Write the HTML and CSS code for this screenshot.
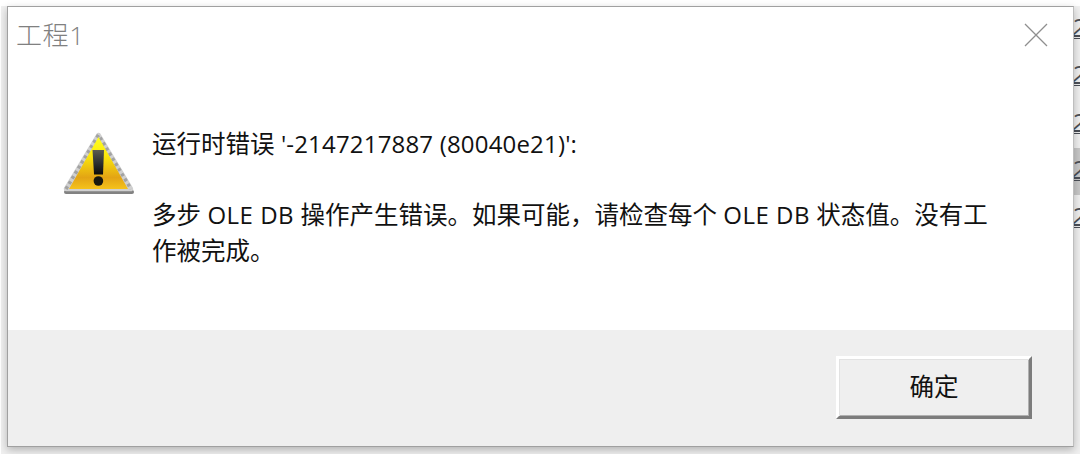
FILE: index.html
```html
<!DOCTYPE html>
<html lang="zh-CN">
<head>
    <meta charset="UTF-8">
    <meta name="viewport" content="width=device-width, initial-scale=1.0">
    <title>工程1</title>
    <link rel="stylesheet" href="styles.css">
</head>
<body>
    <!-- list behind the dialog -->
    <div class="backdrop">
        <div class="row">2</div>
        <div class="row">2</div>
        <div class="row">2</div>
        <div class="row selected">2</div>
        <div class="row">2</div>
    </div>
    <div class="dialog">
        <div class="titlebar">
            <span class="title">工程1</span>
            <svg class="close" width="24" height="24" viewBox="0 0 24 24">
                <path d="M1 1L23 23M23 1L1 23" fill="none" stroke="#8f8f8f" stroke-width="1.3"/>
            </svg>
        </div>
        <div class="content">
            <svg class="warning" width="72" height="66" viewBox="0 0 72 66">
                <defs>
                    <linearGradient id="yellow" x1="0" y1="0" x2="0" y2="1">
                        <stop offset="0" stop-color="#ffff20"/>
                        <stop offset="0.35" stop-color="#fbe90c"/>
                        <stop offset="0.78" stop-color="#e3a414"/>
                        <stop offset="1" stop-color="#f5c21c"/>
                    </linearGradient>
                    <linearGradient id="mark" x1="0" y1="0" x2="0" y2="1">
                        <stop offset="0" stop-color="#5c5c50"/>
                        <stop offset="0.5" stop-color="#2e3234"/>
                        <stop offset="1" stop-color="#0c0c08"/>
                    </linearGradient>
                </defs>
                <path d="M3 61H69" stroke="#828282" stroke-width="4" stroke-linecap="round"/>
                <path d="M35.5 4L68 58H3Z" fill="#d2d2d2" stroke="#d0d0d0" stroke-width="4.5" stroke-linejoin="round"/>
                <path d="M3 58L35.5 4L68 58" fill="none" stroke="#a2a2a2" stroke-width="3.5" stroke-dasharray="3 3"/>
                <path d="M35.5 6L65 58H6Z" fill="url(#yellow)"/>
                <path d="M29.5 19H41L40 43.5H31Z" fill="url(#mark)"/>
                <circle cx="35.4" cy="50" r="4.8" fill="#17170f"/>
            </svg>
            <div class="message">
                <p>运行时错误 <span class="code">'-2147217887 (80040e21)':</span></p>
                <p>多步 <span class="latin">OLE DB</span> 操作产生错误。如果可能，请检查每个 <span class="latin">OLE DB</span> 状态值。没有工<br>作被完成。</p>
            </div>
        </div>
        <div class="footer">
            <button class="ok">确定</button>
        </div>
    </div>
</body>
</html>
```
FILE: styles.css
```css
* {
    box-sizing: border-box;
}
body {
    margin: 0;
    height: 454px;
    padding: 6px 0 0 7px;
    overflow: hidden;
    position: relative;
    background: white;
    font-family: "Open Sans", "Noto Sans CJK SC", sans-serif;
}
.backdrop {
    position: absolute;
    left: 1px;
    top: 6px;
    right: 0;
    bottom: 0;
    background: #f0f0f0;
}
.row {
    height: 47.3px;
    margin-left: 1066px;
    padding: 7px 0 0 4px;
    overflow: hidden;
    font-size: 25px;
    font-style: italic;
    line-height: 28px;
    color: #4c5058;
    text-decoration: underline;
    text-decoration-thickness: 1px;
    text-decoration-skip-ink: none;
    text-underline-offset: 1px;
}
.selected {
    background: #c8c8c8;
}
.dialog {
    position: relative;
    display: flex;
    flex-direction: column;
    width: 1067px;
    height: 441px;
    border: 1px solid #a0a0a0;
    border-right-color: #bebebe;
    background: white;
    box-shadow: 0 3px 8px rgba(0, 0, 0, 0.25);
}
.titlebar {
    display: flex;
    justify-content: space-between;
    height: 57px;
    padding: 10px 25px 0 8px;
}
.title {
    font-size: 26px;
    line-height: 36px;
    font-weight: 300;
    letter-spacing: 0.6px;
    color: #808080;
}
.close {
    margin-top: 6px;
}
.content {
    display: flex;
    flex: 1;
    padding: 62px 0 0 55px;
}
.warning {
    margin-top: 5px;
}
.message {
    margin-left: 17px;
    font-size: 24.5px;
    line-height: 35.5px;
    color: #111111;
    white-space: nowrap;
}
.message p {
    margin: 0 0 35.5px;
}
.code {
    font-size: 24px;
    letter-spacing: 0.18px;
}
.latin {
    font-size: 24px;
    letter-spacing: 0.5px;
}
.footer {
    display: flex;
    justify-content: flex-end;
    height: 116px;
    padding: 26px 41px 0 0;
    background: #efefef;
}
.ok {
    width: 196px;
    height: 63px;
    padding: 0 0 4px;
    border: 3px solid;
    border-color: #ffffff #7c7c7c #7c7c7c #ffffff;
    background: #efefef;
    box-shadow: inset 1px 1px #e2e2e2, inset -1px -1px #b0b0b0;
    font-family: inherit;
    font-size: 24.5px;
    color: #111111;
}
```
